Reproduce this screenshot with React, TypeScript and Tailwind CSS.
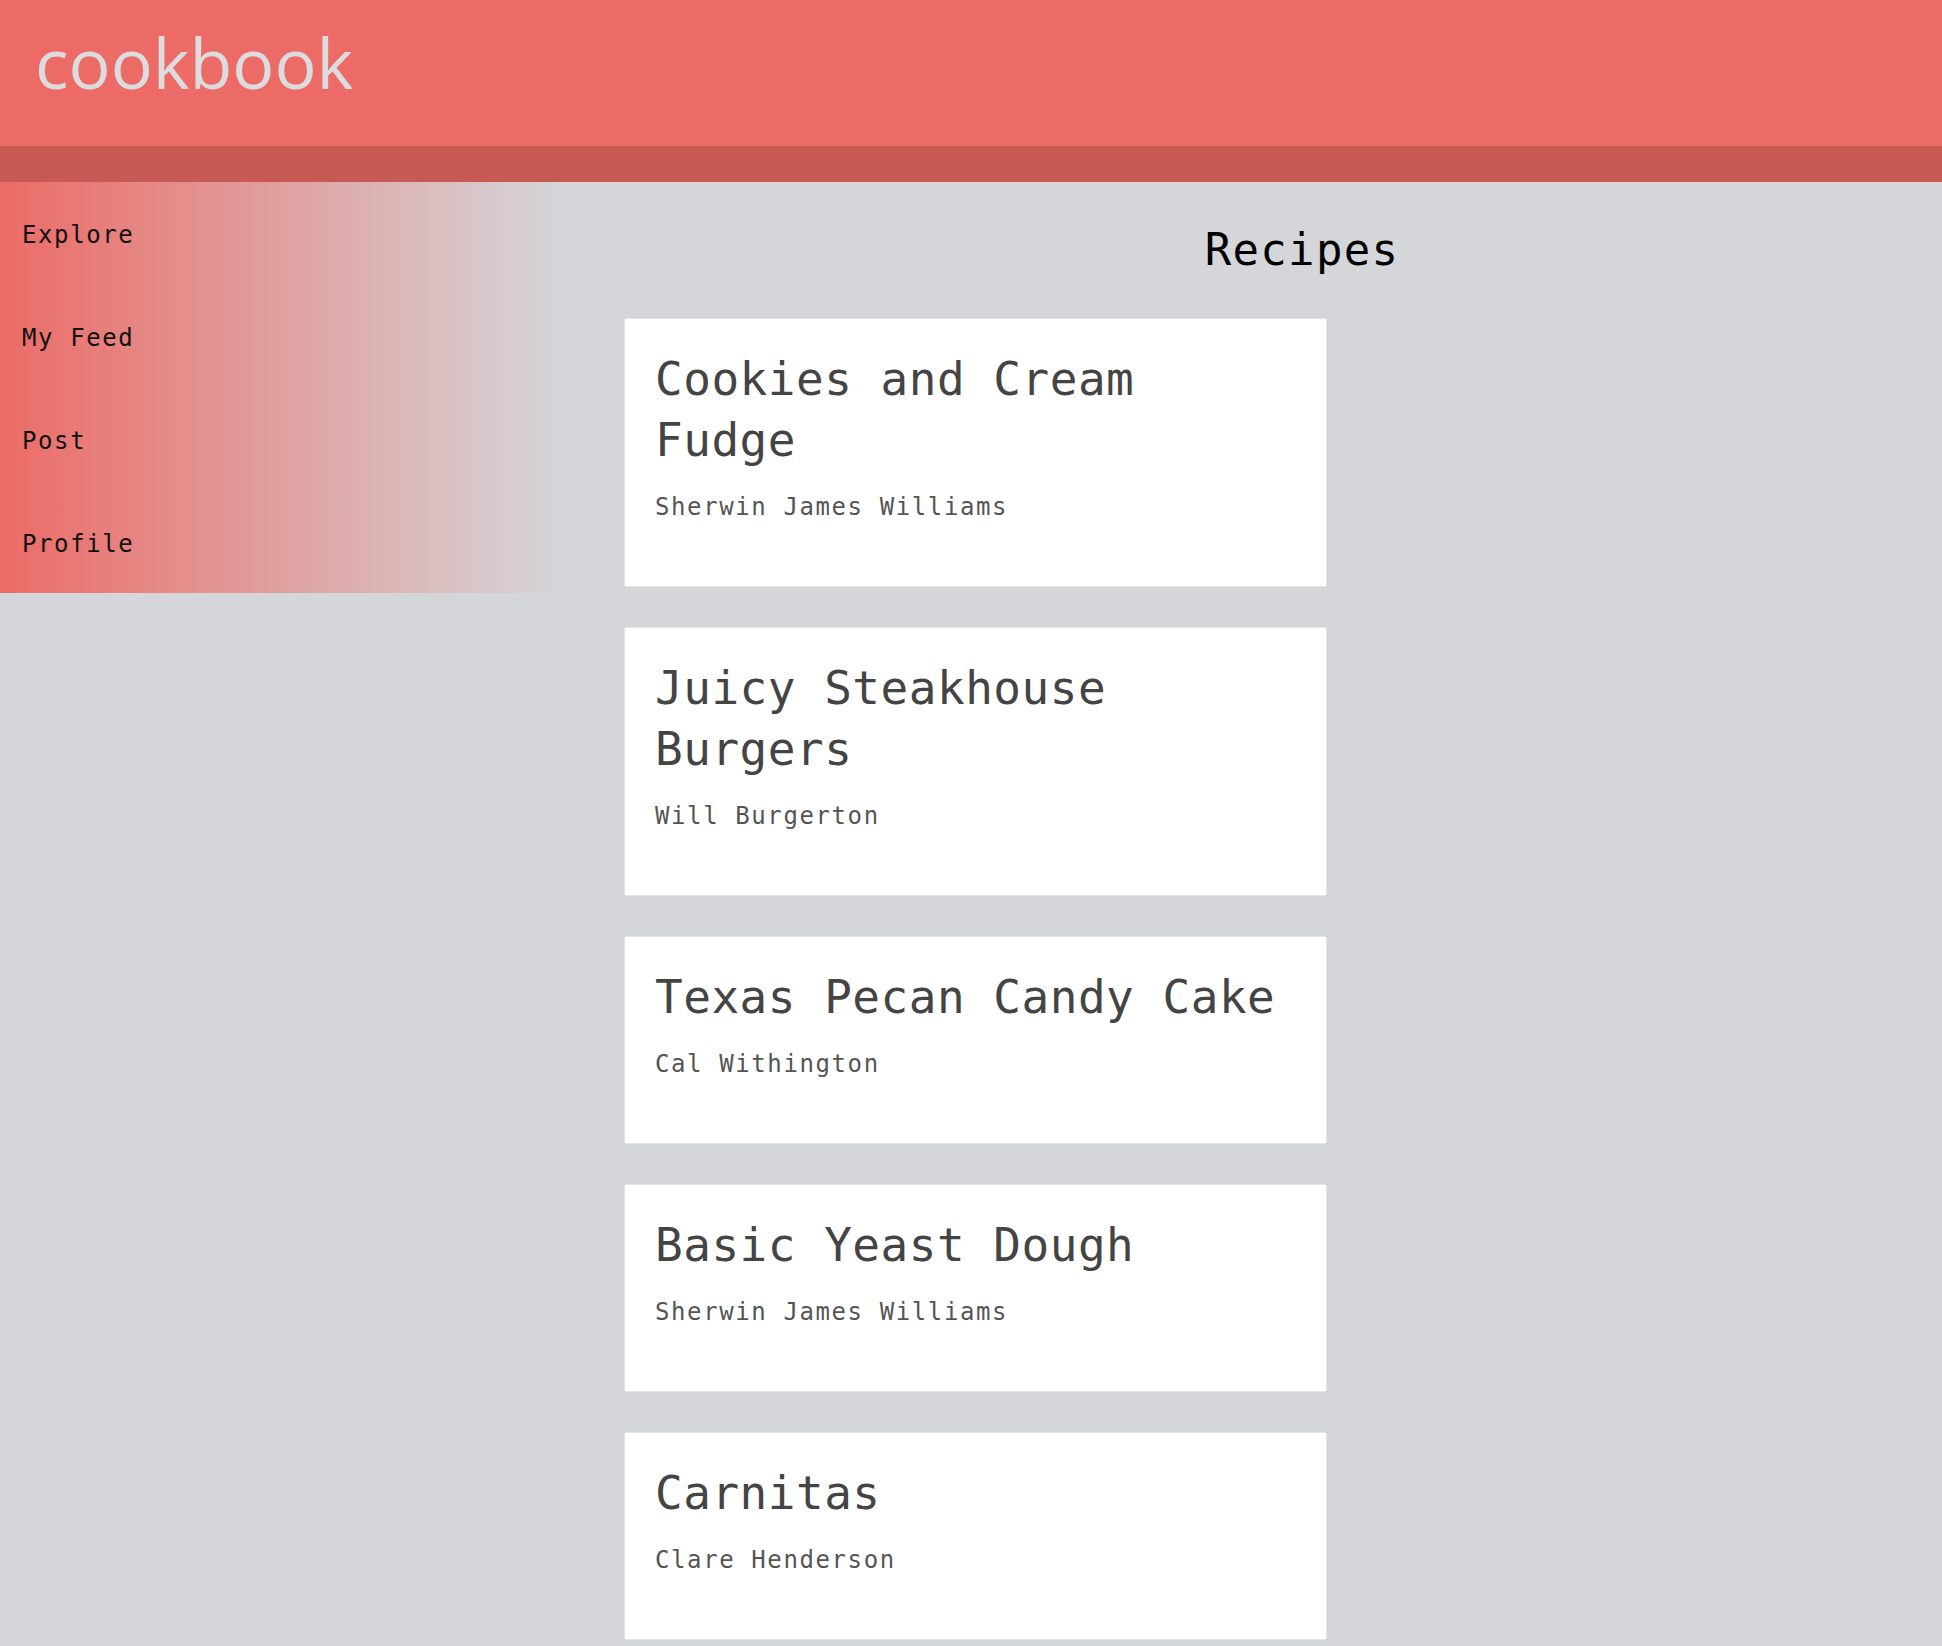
const recipes = [
  { title: "Cookies and Cream Fudge", author: "Sherwin James Williams" },
  { title: "Juicy Steakhouse Burgers", author: "Will Burgerton" },
  { title: "Texas Pecan Candy Cake", author: "Cal Withington" },
  { title: "Basic Yeast Dough", author: "Sherwin James Williams" },
  { title: "Carnitas", author: "Clare Henderson" },
];

const navItems = ["Explore", "My Feed", "Post", "Profile"];

export default function App() {
  return (
    <div className="min-h-screen bg-[#d4d6da] font-['DejaVu_Sans_Mono',monospace]">
      {/* Header */}
      <header className="h-[146px] bg-[#ec6b66] pl-[35px] pt-[27px]">
        <h1 className="font-['Open_Sans',sans-serif] text-[70px] leading-none text-[#dcdcdf]">
          cookbook
        </h1>
      </header>
      <div className="h-[36px] bg-[#c85a55]" />

      <div className="flex items-start">
        {/* Sidebar */}
        <nav className="w-[570px] shrink-0 bg-[linear-gradient(to_right,#ec6b66_0%,#d4d6da_99%)] pl-[22px] pt-[37px] pb-[33px]">
          <ul className="flex flex-col gap-[71px]">
            {navItems.map((item) => (
              <li key={item} className="text-[24px] leading-[32px] tracking-[1.6px] text-[#111]">
                {item}
              </li>
            ))}
          </ul>
        </nav>

        {/* Main */}
        <main className="flex-1 pl-[54px] pt-[42px] pb-[6px]">
          <h2 className="pl-[38px] text-center text-[44px] leading-[52px] tracking-[1.3px] text-black">
            Recipes
          </h2>
          <div className="mt-[42px] flex flex-col gap-[40px]">
            {recipes.map((r) => (
              <div
                key={r.title}
                className="w-[703px] rounded-[2px] border border-[#e6e6e6] bg-white px-[30px] pt-[30px] pb-[63px]"
              >
                <h3 className="text-[46px] leading-[61px] tracking-[0.5px] text-[#444]">
                  {r.title}
                </h3>
                <p className="mt-[20px] text-[24px] leading-[32px] tracking-[1.6px] text-[#555]">
                  {r.author}
                </p>
              </div>
            ))}
          </div>
        </main>
      </div>
    </div>
  );
}
